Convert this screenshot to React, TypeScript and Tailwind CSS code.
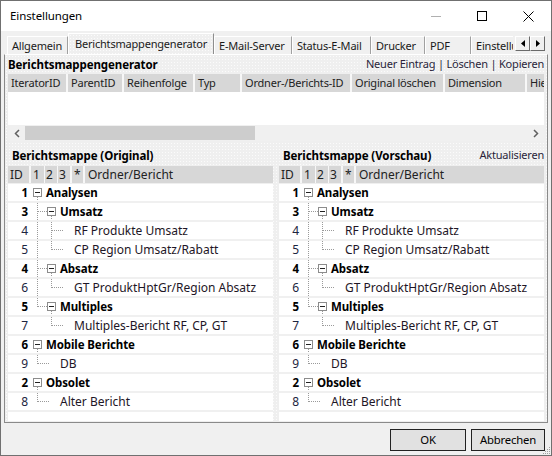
import React from 'react';

type Node = { id: number; label: string; level: number; folder?: boolean };

const tree: Node[] = [
  { id: 1, label: 'Analysen', level: 0, folder: true },
  { id: 3, label: 'Umsatz', level: 1, folder: true },
  { id: 4, label: 'RF Produkte Umsatz', level: 2 },
  { id: 5, label: 'CP Region Umsatz/Rabatt', level: 2 },
  { id: 4, label: 'Absatz', level: 1, folder: true },
  { id: 6, label: 'GT ProduktHptGr/Region Absatz', level: 2 },
  { id: 5, label: 'Multiples', level: 1, folder: true },
  { id: 7, label: 'Multiples-Bericht RF, CP, GT', level: 2 },
  { id: 6, label: 'Mobile Berichte', level: 0, folder: true },
  { id: 9, label: 'DB', level: 1 },
  { id: 2, label: 'Obsolet', level: 0, folder: true },
  { id: 8, label: 'Alter Bericht', level: 1 },
];

const columns = [
  { label: 'IteratorID', w: 'w-[58px]' },
  { label: 'ParentID', w: 'w-[54px]' },
  { label: 'Reihenfolge', w: 'w-[69px]' },
  { label: 'Typ', w: 'w-[45px]' },
  { label: 'Ordner-/Berichts-ID', w: 'w-[108px]' },
  { label: 'Original löschen', w: 'w-[91px]' },
  { label: 'Dimension', w: 'w-[80px]' },
  { label: 'Hie', w: 'w-[40px]' },
];

const dotted = 'bg-[#efefef] bg-[radial-gradient(circle,#fbfbfb_0.8px,transparent_0.9px)] bg-[length:3px_3px]';
const bold = 'font-bold text-[11.5px] tracking-[-0.1px] text-black';

function isLast(i: number) {
  const lvl = tree[i].level;
  for (let j = i + 1; j < tree.length; j++) {
    if (tree[j].level < lvl) return true;
    if (tree[j].level === lvl) return false;
  }
  return true;
}

function ancestorIndex(i: number, level: number) {
  for (let j = i - 1; j >= 0; j--) if (tree[j].level === level) return j;
  return -1;
}

const DOT = { stroke: '#9a9a9a', strokeDasharray: '1 1', shapeRendering: 'crispEdges' as const };

function TreeLines({ i }: { i: number }) {
  const n = tree[i];
  const L = n.level;
  const w = 16 + 14 * L;
  const parts: React.ReactNode[] = [];
  // verticals of the ancestors that still have siblings below
  for (let k = 0; k < L - 1; k++) {
    const a = ancestorIndex(i, k + 1);
    if (a >= 0 && !isLast(a)) {
      parts.push(<line key={'a' + k} x1={7.5 + 14 * k} y1={0} x2={7.5 + 14 * k} y2={17} {...DOT} />);
    }
  }
  if (L > 0) {
    const px = 7.5 + 14 * (L - 1);
    parts.push(<line key="p" x1={px} y1={0} x2={px} y2={isLast(i) ? 9 : 17} {...DOT} />);
    const end = n.folder ? 3 + 14 * L : px + 11;
    parts.push(<line key="h" x1={px} y1={8.5} x2={end} y2={8.5} {...DOT} />);
  }
  if (n.folder) {
    const bx = 3.5 + 14 * L;
    parts.push(<line key="d" x1={bx + 4} y1={13} x2={bx + 4} y2={17} {...DOT} />);
    parts.push(<rect key="b" x={bx} y={4.5} width={8} height={8} fill="#fff" stroke="#8c8c8c" shapeRendering="crispEdges" />);
    parts.push(<line key="m" x1={bx + 1.5} y1={8.5} x2={bx + 6.5} y2={8.5} stroke="#222" shapeRendering="crispEdges" />);
  }
  return (
    <svg width={w} height={17} className="shrink-0">
      {parts}
    </svg>
  );
}

function TreePanel() {
  return (
    <div className="flex-1 h-[255px] flex flex-col text-[12px] tracking-normal">
      <div className="flex h-[17px] gap-[2px] bg-[#f7f7f7] text-[#222]">
        <div className="w-[21px] bg-[#d7d7d7] pl-[2px] leading-[17px]">ID</div>
        <div className="flex gap-[1px]">
          <div className="w-[13px] bg-[#d7d7d7] pl-[2px] leading-[17px]">1</div>
          <div className="w-[12px] bg-[#d7d7d7] pl-[1px] leading-[17px]">2</div>
          <div className="w-[12px] bg-[#d7d7d7] pl-[1px] leading-[17px]">3</div>
        </div>
        <div className="w-[11px] bg-[#d7d7d7] pl-[2px] leading-[17px]">*</div>
        <div className="flex-1 bg-[#d7d7d7] pl-[3px] leading-[17px]">Ordner/Bericht</div>
      </div>
      <div className="mt-[1px] flex-1 bg-white overflow-hidden">
        {tree.map((n, i) => (
          <div key={i} className="flex h-[19px] border-b-2 border-[#f0f0f0] leading-[17px]">
            <div className={`w-[22px] shrink-0 text-right pr-[2px] ${n.folder ? bold : 'text-[#1c2540]'}`}>
              {n.id}
            </div>
            <TreeLines i={i} />
            <span className={`whitespace-nowrap ${n.folder ? bold : 'text-[#1e1626]'}`}>{n.label}</span>
          </div>
        ))}
      </div>
    </div>
  );
}

function Tab({ label, w, selected }: { label: string; w: string; selected?: boolean }) {
  if (selected) {
    return (
      <div className={`${w} shrink-0 h-[22px] self-end -mb-[1px] relative z-10 ${dotted} border-t border-l border-white border-r border-r-[#8e8e8e] pl-[6px] leading-[19px] whitespace-nowrap`}>
        {label}
      </div>
    );
  }
  return (
    <div className={`${w} shrink-0 h-[18px] self-end bg-[#f0f0f0] border-t border-l border-white border-r border-r-[#a0a0a0] pl-[4px] leading-[17px] whitespace-nowrap overflow-hidden`}>
      {label}
    </div>
  );
}

export default function App() {
  return (
    <div className="w-[552px] h-[456px] border border-[#707070] bg-[#f0f0f0] flex flex-col overflow-hidden font-['Segoe_UI','Noto_Sans',sans-serif] text-[11px] tracking-[-0.2px] text-[#1a1a1a]">
      {/* title bar */}
      <div className="h-[30px] bg-white flex items-center shrink-0">
        <div className="pl-[9px] flex-1 text-[11.5px] tracking-[-0.1px] text-black">Einstellungen</div>
        <div className="w-[46px] h-[30px] flex items-center justify-center">
          <div className="w-[10px] h-[1px] bg-[#b0b0b0]" />
        </div>
        <div className="w-[46px] h-[30px] flex items-center justify-center">
          <div className="w-[10px] h-[10px] border border-black" />
        </div>
        <div className="w-[46px] h-[30px] flex items-center justify-center">
          <svg width="11" height="11" viewBox="0 0 11 11">
            <path d="M0.5 0.5 L10.5 10.5 M10.5 0.5 L0.5 10.5" stroke="#000" strokeWidth="1" />
          </svg>
        </div>
      </div>

      {/* tabs */}
      <div className="h-[23px] shrink-0 flex pl-[6px]">
        <div className="w-[506px] flex overflow-hidden">
          <Tab label="Allgemein" w="w-[61px]" />
          <Tab label="Berichtsmappengenerator" w="w-[146px]" selected />
          <Tab label="E-Mail-Server" w="w-[78px]" />
          <Tab label="Status-E-Mail" w="w-[79px]" />
          <Tab label="Drucker" w="w-[54px]" />
          <Tab label="PDF" w="w-[46px]" />
          <Tab label="Einstellungen" w="w-[80px]" />
        </div>
        <div className="ml-[2px] mt-[5px] flex h-[15px]">
          <div className="w-[15px] h-[15px] border border-t-white border-l-white border-r-[#6a6a6a] border-b-[#6a6a6a] flex items-center justify-center">
            <svg width="4" height="7"><path d="M4 0 L0 3.5 L4 7 Z" fill="#000" /></svg>
          </div>
          <div className="w-[15px] h-[15px] border border-t-white border-l-white border-r-[#6a6a6a] border-b-[#6a6a6a] flex items-center justify-center">
            <svg width="4" height="7"><path d="M0 0 L4 3.5 L0 7 Z" fill="#000" /></svg>
          </div>
        </div>
      </div>

      {/* tab panel */}
      <div className={`mx-[3px] h-[369px] shrink-0 border border-t-white border-l-[#8a8a8a] border-r-[#8a8a8a] border-b-[#8a8a8a] ${dotted} px-[3px] pb-[1px] flex flex-col`}>
        <div className="h-[19px] flex items-center justify-between">
          <span className={bold}>Berichtsmappengenerator</span>
          <span className="text-[#2a1f3a]">Neuer Eintrag | Löschen | Kopieren</span>
        </div>

        <div className="flex h-[18px] gap-[2px] bg-[#f7f7f7] overflow-hidden text-[#222]">
          {columns.map((c) => (
            <div key={c.label} className={`${c.w} shrink-0 bg-[#d7d7d7] pl-[3px] leading-[18px] whitespace-nowrap overflow-hidden`}>
              {c.label}
            </div>
          ))}
        </div>
        <div className="h-[33px] bg-white" />
        <div className="h-[16px] bg-[#f0f0f0] flex items-center">
          <div className="w-[17px] flex justify-center">
            <svg width="6" height="9"><path d="M5 1 L1.5 4.5 L5 8" fill="none" stroke="#606060" strokeWidth="1.5" /></svg>
          </div>
          <div className="w-[230px] h-[14px] bg-[#cdcdcd]" />
          <div className="flex-1" />
          <div className="w-[17px] flex justify-center">
            <svg width="6" height="9"><path d="M1 1 L4.5 4.5 L1 8" fill="none" stroke="#606060" strokeWidth="1.5" /></svg>
          </div>
        </div>

        <div className="mt-[5px] h-[19px] flex items-center gap-[6px]">
          <div className={`flex-1 pl-[4px] ${bold}`}>Berichtsmappe (Original)</div>
          <div className="flex-1 flex justify-between items-center pl-[4px]">
            <span className={bold}>Berichtsmappe (Vorschau)</span>
            <span className="text-[#2a1f3a]">Aktualisieren</span>
          </div>
        </div>

        <div className="mt-[1px] flex gap-[6px]">
          <TreePanel />
          <TreePanel />
        </div>
      </div>

      {/* footer */}
      <div className="flex-1 flex justify-end items-start pt-[6px] pr-[6px] gap-[5px] relative">
        <button className="w-[76px] h-[22px] bg-[#e1e1e1] border border-[#222] text-black leading-[20px] text-[11.3px]">OK</button>
        <button className="w-[74px] h-[22px] bg-[#e1e1e1] border border-[#222] text-black leading-[20px] text-[11.3px]">Abbrechen</button>
        <svg width="9" height="9" className="absolute right-0 bottom-0">
          <g fill="#a0a0a0">
            <rect x="7" y="1" width="1" height="1" />
            <rect x="5" y="3" width="1" height="1" />
            <rect x="7" y="3" width="1" height="1" />
            <rect x="3" y="5" width="1" height="1" />
            <rect x="5" y="5" width="1" height="1" />
            <rect x="7" y="5" width="1" height="1" />
            <rect x="1" y="7" width="1" height="1" />
            <rect x="3" y="7" width="1" height="1" />
            <rect x="5" y="7" width="1" height="1" />
            <rect x="7" y="7" width="1" height="1" />
          </g>
        </svg>
      </div>
    </div>
  );
}
